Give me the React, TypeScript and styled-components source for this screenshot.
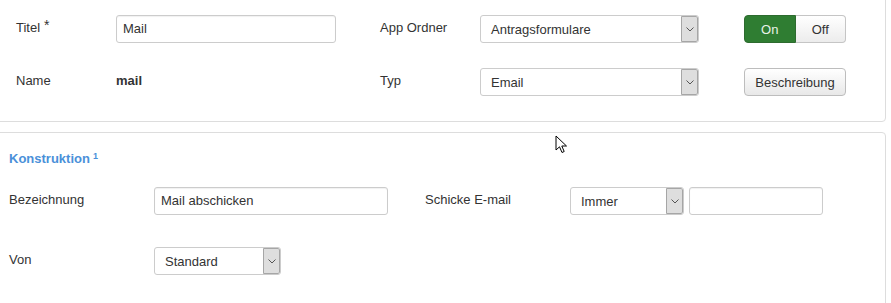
import React from "react";
import styled, { createGlobalStyle } from "styled-components";

const Global = createGlobalStyle`
  html, body { margin: 0; padding: 0; background: #fff; }
  body { font-family: "Liberation Sans", Arial, sans-serif; font-size: 13px; color: #333; overflow: hidden; }
`;

const Page = styled.div`
  position: relative;
  width: 891px;
  height: 303px;
  overflow: hidden;
`;

const Panel = styled.section<{ $top: number; $bottom: number }>`
  margin: ${(p) => p.$top}px 5px 10px -10px;
  border: 1px solid #ddd;
  border-radius: 4px;
  padding: ${(p) => p.$bottom}px 0 0 0;
  box-sizing: border-box;
`;

const TopGrid = styled.div`
  display: grid;
  grid-template-columns: 100px 220px 44px 100px 219px 45px 102px;
  grid-auto-rows: 28px;
  row-gap: 25px;
  padding: 24px 0 25px 25px;
`;

const BottomArea = styled.div`
  padding: 0 0 40px 18px;
`;

const SectionTitle = styled.h3`
  margin: 0;
  font-size: 13px;
  font-weight: bold;
  color: #4a90d9;
  line-height: 18px;
  sup {
    font-size: 9px;
    vertical-align: top;
    position: relative;
    top: -3px;
    margin-left: 3px;
  }
`;

const BottomGrid = styled.div`
  display: grid;
  grid-template-columns: 145px 234px 37px 145px auto;
  grid-auto-rows: 28px;
  row-gap: 32px;
  margin-top: 19px;
`;

const Label = styled.div`
  padding-top: 4px;
  line-height: 18px;
  white-space: nowrap;
  sup {
    font-size: 14px;
    vertical-align: top;
    position: relative;
    top: -3px;
    margin-left: 4px;
    font-weight: normal;
  }
`;

const Value = styled.div`
  font-weight: bold;
  line-height: 18px;
  padding-top: 4px;
`;

const Input = styled.div<{ $w?: number }>`
  box-sizing: border-box;
  height: 28px;
  width: ${(p) => (p.$w ? `${p.$w}px` : "100%")};
  border: 1px solid #ccc;
  border-radius: 3px;
  padding: 0 6px;
  line-height: 26px;
  background: #fff;
  box-shadow: inset 0 1px 1px rgba(0, 0, 0, 0.06);
`;

const SelectBox = styled.div<{ $w: number }>`
  box-sizing: border-box;
  display: flex;
  height: 28px;
  width: ${(p) => p.$w}px;
  border: 1px solid #ccc;
  border-radius: 3px;
  background: #fff;
  overflow: hidden;
`;

const SelectText = styled.div`
  flex: 1;
  padding: 0 10px;
  line-height: 28px;
`;

const Arrow = styled.div`
  box-sizing: border-box;
  width: 17px;
  background: #dedede;
  border: 1px solid #a6a6a6;
  border-radius: 0 2px 2px 0;
  display: flex;
  align-items: center;
  justify-content: center;
`;

const Pair = styled.div`
  display: flex;
  gap: 5px;
`;

const Toggle = styled.div`
  display: flex;
  height: 28px;
  box-sizing: border-box;
`;

const ToggleBtn = styled.div<{ $active?: boolean }>`
  flex: 1;
  display: flex;
  align-items: center;
  justify-content: center;
  border: 1px solid ${(p) => (p.$active ? "#2d6b2f" : "#c5c5c5")};
  background: ${(p) => (p.$active ? "#2f7d32" : "linear-gradient(#ffffff, #ececec)")};
  color: ${(p) => (p.$active ? "#e8f2e8" : "#333")};
  border-radius: ${(p) => (p.$active ? "4px 0 0 4px" : "0 4px 4px 0")};
  ${(p) => (p.$active ? "" : "border-left: none;")}
`;

const Button = styled.div`
  box-sizing: border-box;
  height: 28px;
  display: flex;
  align-items: center;
  justify-content: center;
  border: 1px solid #bdbdbd;
  border-radius: 4px;
  background: linear-gradient(#ffffff, #e8e8e8);
  color: #333;
`;

const Cursor = styled.svg`
  position: absolute;
  left: 555px;
  top: 135px;
`;

const Chevron = () => (
  <svg width="8" height="5" viewBox="0 0 8 5">
    <path d="M0.5 0.5 L4 4 L7.5 0.5" fill="none" stroke="#555" strokeWidth="1" />
  </svg>
);

const Select = ({ w, text }: { w: number; text: string }) => (
  <SelectBox $w={w}>
    <SelectText>{text}</SelectText>
    <Arrow>
      <Chevron />
    </Arrow>
  </SelectBox>
);

const Gap = styled.div``;

export default function App() {
  return (
    <Page>
      <Global />
      <Panel $top={-10} $bottom={0}>
        <TopGrid>
          <Label>
            Titel<sup>*</sup>
          </Label>
          <Input>Mail</Input>
          <Gap />
          <Label>App Ordner</Label>
          <Select w={219} text="Antragsformulare" />
          <Gap />
          <Toggle>
            <ToggleBtn $active>On</ToggleBtn>
            <ToggleBtn>Off</ToggleBtn>
          </Toggle>

          <Label>Name</Label>
          <Value>mail</Value>
          <Gap />
          <Label>Typ</Label>
          <Select w={219} text="Email" />
          <Gap />
          <Button>Beschreibung</Button>
        </TopGrid>
      </Panel>
      <Panel $top={0} $bottom={17}>
        <BottomArea>
          <SectionTitle>
            Konstruktion<sup>1</sup>
          </SectionTitle>
          <BottomGrid>
            <Label>Bezeichnung</Label>
            <Input>Mail abschicken</Input>
            <Gap />
            <Label>Schicke E-mail</Label>
            <Pair>
              <Select w={114} text="Immer" />
              <Input $w={134} />
            </Pair>

            <Label>Von</Label>
            <Select w={127} text="Standard" />
          </BottomGrid>
        </BottomArea>
      </Panel>
      <Cursor width="14" height="20" viewBox="0 0 14 20">
        <path
          d="M1 1 L1 15 L4.5 11.8 L7 17.5 L9.2 16.5 L6.8 11 L11.5 11 Z"
          fill="#fff"
          stroke="#000"
          strokeWidth="1"
          strokeLinejoin="round"
        />
      </Cursor>
    </Page>
  );
}
